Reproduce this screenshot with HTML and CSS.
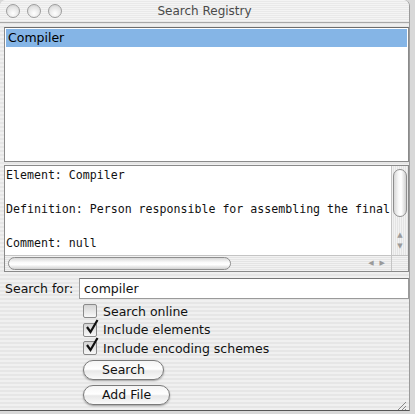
FILE: index.html
```html
<!DOCTYPE html>
<html lang="en">
<head>
  <meta charset="UTF-8" />
  <title>Search Registry</title>
  <link rel="stylesheet" href="styles.css">
</head>
<body>
  <div class="window">
    <div class="titlebar">
      <div class="lights">
        <span class="light"></span>
        <span class="light"></span>
        <span class="light"></span>
      </div>
      <div class="title">Search Registry</div>
    </div>

    <div class="content">
      <div class="list">
        <div class="row selected">Compiler</div>
      </div>

      <div class="detail">
        <div class="detail-top">
          <pre class="text">Element: Compiler

Definition: Person responsible for assembling the final

Comment: null</pre>
          <div class="vscroll">
            <div class="vthumb"></div>
            <div class="varrows">
              <span class="arrow">&#9650;</span>
              <span class="arrow">&#9660;</span>
            </div>
          </div>
        </div>
        <div class="hscroll">
          <div class="hthumb"></div>
          <div class="harrows">
            <span class="arrow">&#9664;</span>
            <span class="arrow">&#9654;</span>
          </div>
          <div class="corner"></div>
        </div>
      </div>

      <div class="search-row">
        <label class="search-label">Search for:</label>
        <div class="field">compiler</div>
      </div>

      <div class="options">
        <div class="check"><span class="box"></span>Search online</div>
        <div class="check"><span class="box on"><svg width="14" height="16" viewBox="0 0 14 16"><path d="M2 8 L5.5 13 L12.5 1" fill="none" stroke="#111" stroke-width="2.2"/></svg></span>Include elements</div>
        <div class="check"><span class="box on"><svg width="14" height="16" viewBox="0 0 14 16"><path d="M2 8 L5.5 13 L12.5 1" fill="none" stroke="#111" stroke-width="2.2"/></svg></span>Include encoding schemes</div>
        <button class="pill search-btn">Search</button>
        <button class="pill">Add File</button>
      </div>

      <div class="grip">
        <svg width="12" height="12" viewBox="0 0 12 12"><path d="M11 3 L3 11 M11 7 L7 11 M11 10 L10 11" stroke="#888" stroke-width="1"/></svg>
      </div>
    </div>
  </div>
</body>
</html>
```

FILE: styles.css
```css
body {
  margin: 0;
  width: 415px;
  height: 414px;
  background: #d8d8d8;
  font-family: 'DejaVu Sans', sans-serif;
  overflow: hidden;
}

.window {
  width: 409px;
  height: 410px;
  background: repeating-linear-gradient(to bottom, #f0f0f0 0, #f0f0f0 2px, #e6e6e6 2px, #e6e6e6 4px);
  border-right: 1px solid #9a9a9a;
  border-bottom: 1px solid #555;
  border-radius: 6px 6px 0 0;
  display: flex;
  flex-direction: column;
  position: relative;
}

.titlebar {
  height: 22px;
  background: repeating-linear-gradient(to bottom, #f4f4f4 0, #f4f4f4 1px, #e9e9e9 1px, #e9e9e9 2px);
  border-bottom: 1px solid #a8a8a8;
  border-radius: 6px 6px 0 0;
  display: flex;
  align-items: center;
  position: relative;
}

.lights {
  display: flex;
  gap: 7px;
  padding-left: 6px;
}

.light {
  width: 12px;
  height: 12px;
  border-radius: 50%;
  border: 1px solid #9d9d9d;
  background: radial-gradient(circle at 50% 70%, #ffffff 0, #e4e4e4 60%, #c8c8c8 100%);
}

.title {
  position: absolute;
  left: 0;
  right: 0;
  text-align: center;
  font-size: 12px;
  color: #4a4a4a;
}

.content {
  flex: 1;
  display: flex;
  flex-direction: column;
  padding: 4px 0 0 4px;
}

.list {
  height: 131px;
  background: #fff;
  border: 1px solid #8a8a8a;
  border-top-color: #6e6e6e;
  padding: 1px;
}

.row {
  height: 18px;
  line-height: 18px;
  font-size: 12.5px;
  padding-left: 2px;
  color: #000;
}

.row.selected {
  background: #85b5e6;
}

.detail {
  margin-top: 3px;
  border: 1px solid #8a8a8a;
  background: #fff;
  display: flex;
  flex-direction: column;
}

.detail-top {
  display: flex;
  height: 89px;
}

.text {
  flex: 1;
  margin: 0;
  padding: 1px 0 0 1px;
  font-family: 'DejaVu Sans Mono', monospace;
  font-size: 11.6px;
  line-height: 17px;
  white-space: pre;
  overflow: hidden;
  color: #111;
}

.vscroll {
  width: 16px;
  border-left: 1px solid #c4c4c4;
  background: repeating-linear-gradient(to right, #f2f2f2 0, #f2f2f2 1px, #e4e4e4 1px, #e4e4e4 2px);
  display: flex;
  flex-direction: column;
}

.vthumb {
  margin: 3px 1px 0 1px;
  height: 46px;
  border: 1px solid #8e8e8e;
  border-radius: 7px;
  background: linear-gradient(to right, #d8d8d8, #fafafa 40%, #ffffff 60%, #d0d0d0);
}

.varrows {
  margin-top: auto;
  display: flex;
  flex-direction: column;
  align-items: center;
  padding-bottom: 3px;
}

.arrow {
  font-size: 7px;
  color: #9a9a9a;
  line-height: 11px;
}

.hscroll {
  height: 15px;
  border-top: 1px solid #c4c4c4;
  background: repeating-linear-gradient(to bottom, #f2f2f2 0, #f2f2f2 1px, #e4e4e4 1px, #e4e4e4 2px);
  display: flex;
  align-items: center;
}

.hthumb {
  margin-left: 3px;
  width: 221px;
  height: 11px;
  border: 1px solid #8e8e8e;
  border-radius: 7px;
  background: linear-gradient(to bottom, #d8d8d8, #fafafa 40%, #ffffff 60%, #d0d0d0);
}

.harrows {
  margin-left: auto;
  display: flex;
  gap: 6px;
  padding-right: 6px;
}

.corner {
  width: 16px;
  height: 15px;
  border-left: 1px solid #c4c4c4;
}

.search-row {
  display: flex;
  align-items: center;
  margin-top: 6px;
  gap: 6px;
}

.search-label {
  font-size: 12.5px;
  color: #111;
  padding-left: 1px;
}

.field {
  flex: 1;
  height: 19px;
  line-height: 19px;
  background: #fff;
  border: 1px solid #9a9a9a;
  border-top-color: #777;
  padding-left: 4px;
  font-size: 12.5px;
  color: #111;
}

.options {
  display: flex;
  flex-direction: column;
  align-items: flex-start;
  padding-left: 79px;
  margin-top: 3px;
}

.check {
  display: flex;
  align-items: center;
  height: 18.5px;
  font-size: 12.5px;
  color: #111;
}

.box {
  width: 12px;
  height: 12px;
  border: 1px solid #8a8a8a;
  border-radius: 2px;
  background: linear-gradient(to bottom, #d4d4d4, #f8f8f8);
  margin-right: 6px;
  position: relative;
}

.box svg {
  position: absolute;
  left: 1px;
  top: -5px;
}

.pill {
  margin-top: 5px;
  height: 20px;
  padding: 0 18px;
  border: 1px solid #7a7a7a;
  border-radius: 10px;
  background: linear-gradient(to bottom, #f4f4f4 0, #ffffff 45%, #e8e8e8 55%, #fafafa 100%);
  box-shadow: 0 1px 2px rgba(0, 0, 0, 0.35);
  font-family: 'DejaVu Sans', sans-serif;
  font-size: 12.5px;
  color: #111;
}

.search-btn {
  margin-top: 2px;
  width: 81px;
}

.grip {
  position: absolute;
  right: 2px;
  bottom: 2px;
  height: 12px;
}
```
